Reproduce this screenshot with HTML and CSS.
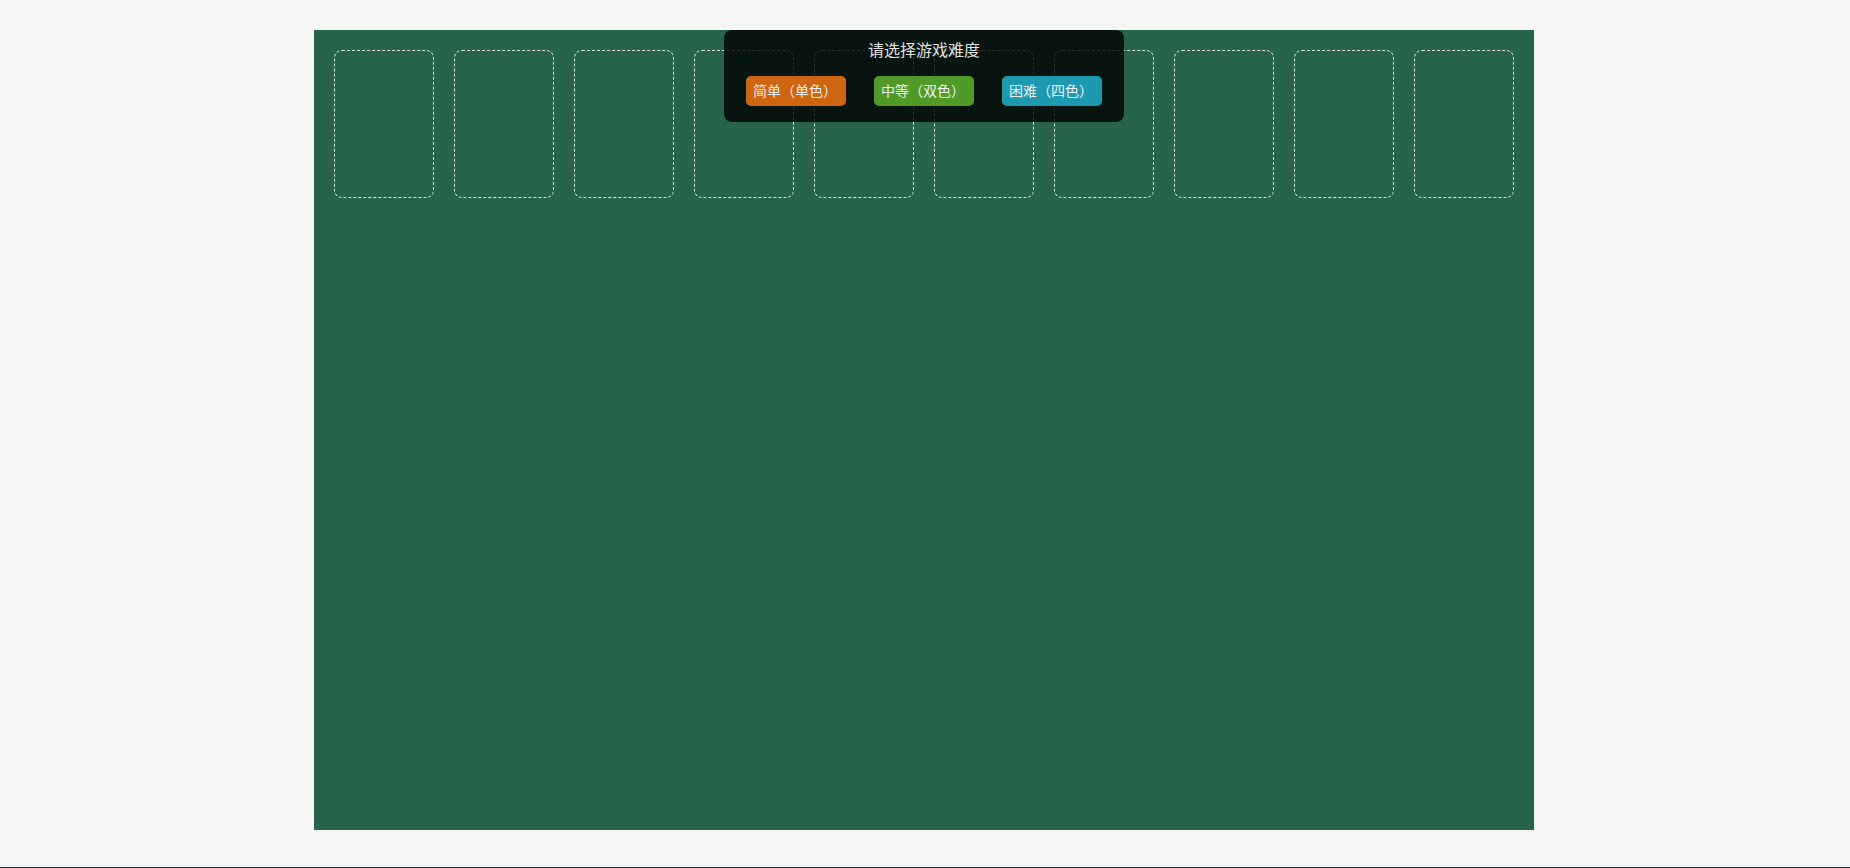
FILE: index.html
```html
<!DOCTYPE html>
<html lang="zh-CN">
<head>
<meta charset="utf-8">
<title>蜘蛛纸牌</title>
<link rel="stylesheet" href="styles.css">
</head>
<body>
<div class="page">
  <div class="table">
    <div class="slots">
      <div class="slot"></div>
      <div class="slot"></div>
      <div class="slot"></div>
      <div class="slot"></div>
      <div class="slot"></div>
      <div class="slot"></div>
      <div class="slot"></div>
      <div class="slot"></div>
      <div class="slot"></div>
      <div class="slot"></div>
    </div>
    <div class="dialog">
      <div class="dialog-title">请选择游戏难度</div>
      <div class="dialog-buttons">
        <button class="btn btn-easy">简单（单色）</button>
        <button class="btn btn-medium">中等（双色）</button>
        <button class="btn btn-hard">困难（四色）</button>
      </div>
    </div>
  </div>
</div>
<div class="taskbar-edge"></div>
</body>
</html>
```
FILE: styles.css
```css
html, body {
  margin: 0;
  padding: 0;
  background: #f6f6f6;
  font-family: "Noto Sans CJK SC", "Microsoft YaHei", sans-serif;
}

.page {
  display: flex;
  justify-content: center;
  padding: 30px 2px 0 0;
}

.table {
  position: relative;
  width: 1220px;
  height: 800px;
  background: #27644a;
  box-sizing: border-box;
  padding: 20px;
}

.slots {
  display: flex;
  gap: 20px;
}

.slot {
  width: 100px;
  height: 148px;
  box-sizing: border-box;
  border: 1px dashed rgba(255, 255, 255, 0.85);
  border-radius: 8px;
}

.dialog {
  position: absolute;
  top: 0;
  left: 50%;
  transform: translateX(-50%);
  width: 400px;
  box-sizing: border-box;
  padding: 9px 22px 16px;
  background: rgba(0, 0, 0, 0.8);
  border-radius: 8px;
  display: flex;
  flex-direction: column;
  align-items: center;
}

.dialog-title {
  color: #e2e2e2;
  font-size: 16px;
  line-height: 20px;
  margin-bottom: 17px;
}

.dialog-buttons {
  display: flex;
  gap: 28px;
  width: 100%;
}

.btn {
  width: 100px;
  height: 30px;
  box-sizing: border-box;
  border: none;
  border-radius: 5px;
  padding: 0 0 1px 7px;
  text-align: left;
  color: #f0f0f0;
  font-family: "Noto Sans CJK SC", "Microsoft YaHei", sans-serif;
  font-size: 14px;
  line-height: 29px;
  white-space: nowrap;
  cursor: pointer;
}

.btn-easy { background: #cd6511; }
.btn-medium { background: #529a28; }
.btn-hard { background: #1e9ab0; }

.taskbar-edge {
  position: fixed;
  left: 0;
  right: 0;
  bottom: 0;
  height: 1px;
  background: #1d2a30;
}
```
